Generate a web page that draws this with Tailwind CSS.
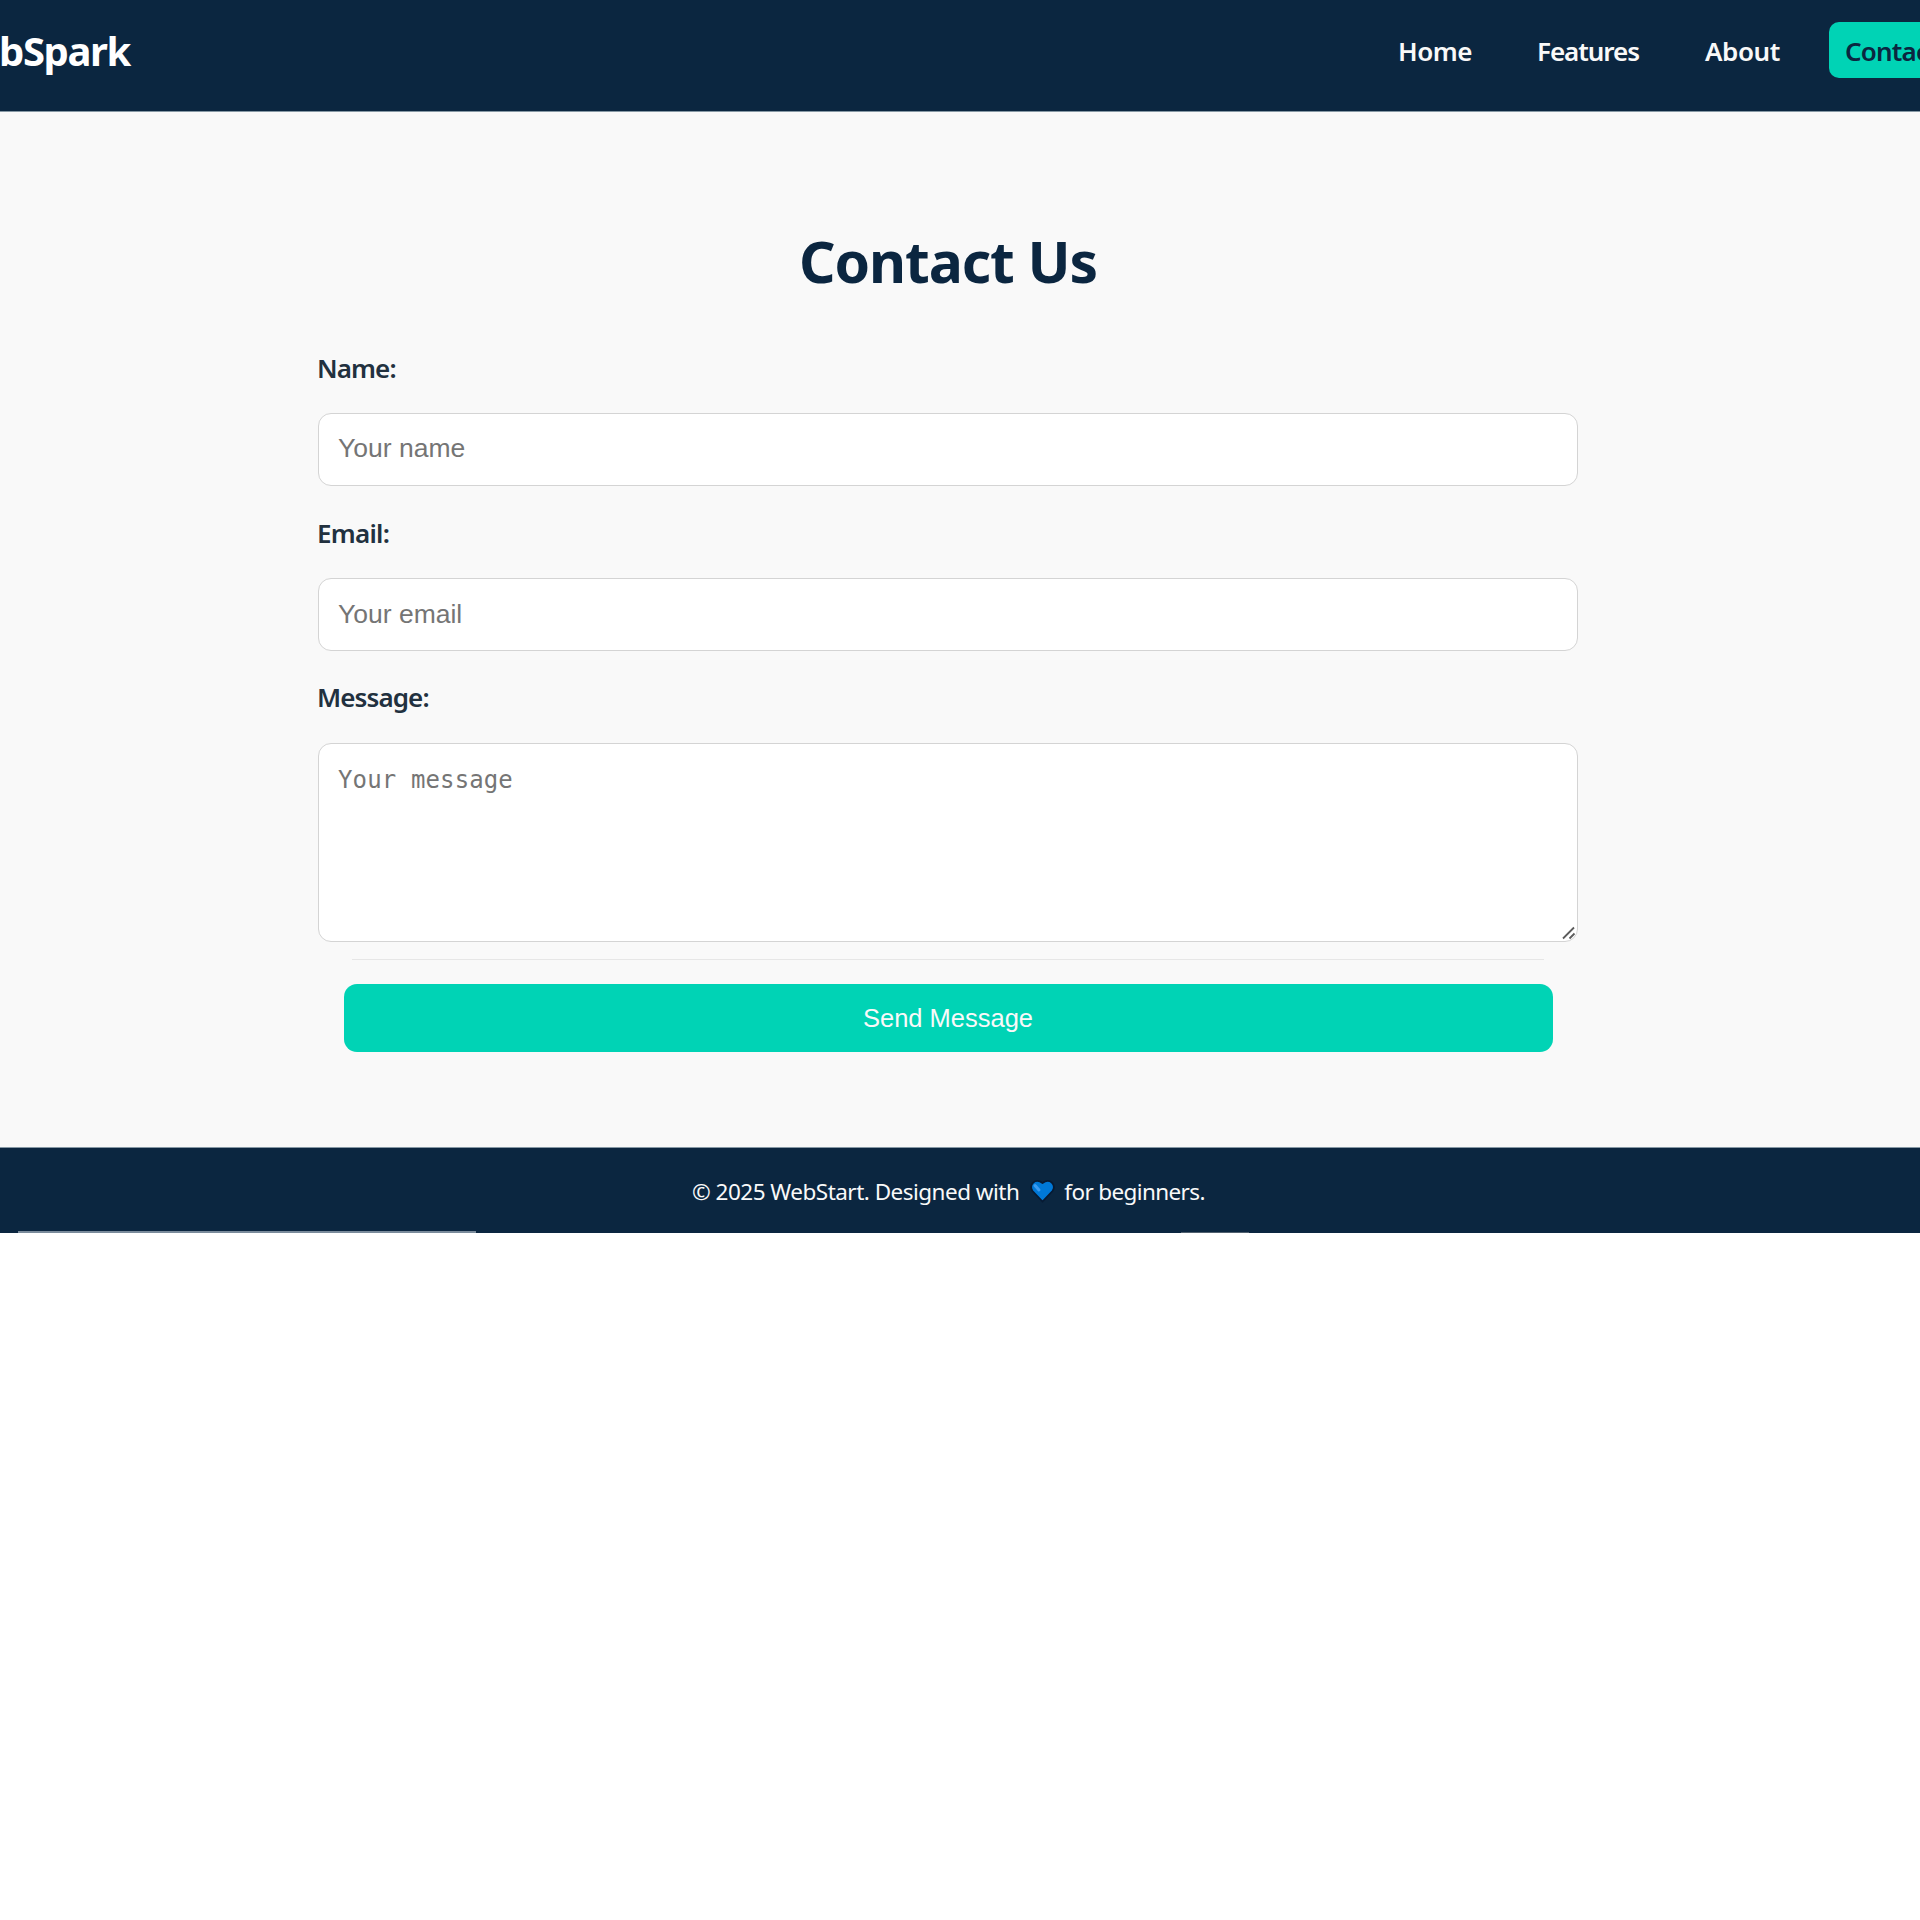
<!DOCTYPE html>
<html lang="en">
<head>
<meta charset="utf-8">
<title>WebSpark</title>
<script src="https://cdn.jsdelivr.net/npm/@tailwindcss/browser@4"></script>
</head>
<body class="bg-white overflow-x-hidden font-['Noto_Sans',sans-serif] text-[26px]">
<header class="h-28 bg-[#0b2640] border-b border-[#8799a5] flex items-start justify-between pt-[22px] overflow-hidden whitespace-nowrap">
  <div class="h-14 flex items-center pt-0.5 -ml-px text-[40px] font-bold tracking-[-1.4px] text-white">bSpark</div>
  <nav class="h-14 w-[522px] shrink-0 flex items-center font-semibold text-[#f9f9f9]">
    <a class="w-[139px] pt-0.5 shrink-0 tracking-[-0.5px]">Home</a>
    <a class="w-[168px] pt-0.5 shrink-0 tracking-[-1.05px]">Features</a>
    <a class="w-[124px] pt-0.5 shrink-0 tracking-[-0.4px]">About</a>
    <a class="h-14 w-[136px] shrink-0 pl-4 pt-0.5 flex items-center rounded-[10px] bg-[#00d3b5] text-[#0b2640] tracking-[-0.8px]">Contact</a>
  </nav>
</header>
<main class="h-[1035px] bg-[#f9f9f9] pl-[318px] pt-[110px]">
  <div class="w-[1260px] flex flex-col">
    <h1 class="h-20 flex items-center justify-center text-[57px] font-bold tracking-[-1.1px] text-[#0b2640]">Contact Us</h1>
    <label class="mt-12 -ml-px h-9 leading-9 font-semibold tracking-[-0.9px] text-[#22313f]">Name:</label>
    <input class="mt-[26.5px] h-[73px] w-full rounded-[13px] border border-[#d4d4d4] bg-white px-[19px] pb-0.5 font-['Liberation_Sans',sans-serif] text-[26.5px] placeholder:text-[#757575]" placeholder="Your name">
    <label class="mt-[29.5px] -ml-px h-9 leading-9 font-semibold tracking-[-0.75px] text-[#22313f]">Email:</label>
    <input class="mt-[27px] h-[73px] w-full rounded-[13px] border border-[#d4d4d4] bg-white px-[19px] font-['Liberation_Sans',sans-serif] text-[26.5px] placeholder:text-[#757575]" placeholder="Your email">
    <label class="mt-7 -ml-px h-9 leading-9 font-semibold tracking-[-0.9px] text-[#22313f]">Message:</label>
    <textarea class="mt-7 h-[199px] w-full resize-none rounded-[13px] border border-[#d4d4d4] bg-white px-[19px] py-[18px] font-['DejaVu_Sans_Mono',monospace] text-[24px] tracking-[0.13px] placeholder:text-[#757575]" placeholder="Your message"></textarea>
    <div class="relative h-0"><svg class="absolute right-0 -top-[17px]" width="18" height="16" fill="none" stroke="#5c5c5c" stroke-width="1.8"><path d="M3 13.5L14 2.5M9.500 13.500L14.500 8.500"/></svg></div>
    <hr class="mt-[17px] mx-[34px] border-[#e6e6e6]">
    <button class="mt-6 mx-[25.5px] h-[68px] rounded-[13px] bg-[#00d3b5] font-['Liberation_Sans',sans-serif] text-[25.5px] text-[#f9f9f9]">Send Message</button>
  </div>
</main>
<footer class="relative h-[86px] bg-[#0b2640] border-t border-[#8799a5] flex items-center pl-[692px] text-[22.5px] text-[#f9f9f9] whitespace-nowrap">
  <span class="pt-0.5 tracking-[-0.51px]">© 2025 WebStart. Designed with</span>
  <svg class="ml-[11px] mr-[9px] w-[25px] h-[24px] shrink-0" viewBox="0 0 25 24"><path d="M12.500 22.500L2.500 12C-1.500 6 5 -1.500 12.500 4C20 -1.500 26.500 6 22.500 12Z" fill="#0078d7" stroke="#071a33" stroke-width="1.800"/><path d="M5 6.500L9 11" stroke="#3d9bf0" stroke-width="3" stroke-linecap="round"/></svg>
  <span class="pt-0.5 tracking-[-0.63px]">for beginners.</span>
  <div class="absolute bottom-0 left-[18px] h-[2px] w-[458px] bg-[#7a8b9b]"></div>
  <div class="absolute bottom-0 left-[1181px] h-px w-[68px] bg-[#50606f]"></div>
</footer>
</body>
</html>
